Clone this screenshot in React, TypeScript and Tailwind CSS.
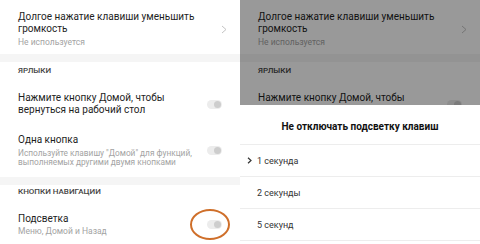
import React from "react"

const font = { fontFamily: "Roboto, 'Noto Sans', 'Liberation Sans', sans-serif" }

function Toggle() {
  return (
    <div className="flex h-[9px] w-[15px] shrink-0 items-center justify-end rounded-full bg-[#ececec] pr-[1px]">
      <div className="h-[7px] w-[7px] rounded-full bg-[#cdcdcd]" />
    </div>
  )
}

function Chevron() {
  return (
    <svg width="6" height="9" viewBox="0 0 6 9" className="shrink-0">
      <polyline points="1,1 5,4.5 1,8" fill="none" stroke="#c4c4c4" strokeWidth="1" />
    </svg>
  )
}

function Band() {
  return <div className="h-[8px] w-full bg-[#f5f5f5]" />
}

// short = only the rows that peek out above the bottom sheet
function SettingsList({ short = false }: { short?: boolean }) {
  return (
    <div className="flex flex-col bg-white">
      <div className="h-[54px] shrink-0 pl-[18px] pr-[13px] pt-[11px]">
        <div className="flex items-center justify-between">
          <div className="w-[192px]">
            <div className="text-[10px] leading-[12px] text-[#1e1e1e]">
              Долгое нажатие клавиши уменьшить громкость
            </div>
            <div className="mt-[2px] text-[8.5px] leading-[10px] text-[#a3a3a3]">Не используется</div>
          </div>
          <Chevron />
        </div>
      </div>
      <Band />
      <div className="h-[22px] shrink-0 pl-[18px] pt-[4px] text-[8px] font-medium leading-[10px] text-[#444]">
        ЯРЛЫКИ
      </div>
      <div className="h-[40px] shrink-0 pl-[18px] pr-[18px] pt-[8px]">
        <div className="flex items-center">
          <div className="h-[24px] min-w-0 flex-1 pr-[6px] text-[10px] leading-[12px] text-[#1e1e1e]">
            {short ? "Нажмите кнопку Домой, чтобы" : "Нажмите кнопку Домой, чтобы вернуться на рабочий стол"}
          </div>
          <Toggle />
        </div>
      </div>
      {short ? null : (
        <>
          <div className="h-[53px] shrink-0 pl-[18px] pr-[18px] pt-[10px]">
            <div className="flex items-center">
              <div className="min-w-0 flex-1 pr-[6px]">
                <div className="text-[10px] leading-[12px] text-[#1e1e1e]">Одна кнопка</div>
                <div className="mt-[3px] text-[8.3px] leading-[9px] text-[#a3a3a3]">
                  Используйте клавишу "Домой" для функций, выполняемых другими двумя кнопками
                </div>
              </div>
              <Toggle />
            </div>
          </div>
          <Band />
          <div className="h-[20px] shrink-0 pl-[18px] pt-[2px] text-[8px] font-medium leading-[10px] text-[#444]">
            КНОПКИ НАВИГАЦИИ
          </div>
          <div className="h-[39px] shrink-0 pl-[18px] pr-[18px] pt-[8px]">
            <div className="flex items-center">
              <div className="min-w-0 flex-1 pr-[6px]">
                <div className="text-[10px] leading-[12px] text-[#1e1e1e]">Подсветка</div>
                <div className="mt-[1px] text-[8.5px] leading-[10px] text-[#a3a3a3]">Меню, Домой и Назад</div>
              </div>
              <Toggle />
            </div>
          </div>
        </>
      )}
    </div>
  )
}

function Option({ label, selected }: { label: string; selected?: boolean }) {
  return (
    <div className="flex h-[32px] items-center border-b border-[#ededed] pl-[7px]">
      <div className="flex w-[10px] items-center">
        {selected ? (
          <svg width="5" height="7" viewBox="0 0 5 7">
            <polyline points="1,0.8 4,3.5 1,6.2" fill="none" stroke="#333" strokeWidth="1.2" />
          </svg>
        ) : null}
      </div>
      <span className="text-[9px] leading-[10px] text-[#333]">{label}</span>
    </div>
  )
}

export default function App() {
  return (
    <div className="flex h-[244px] w-[480px] overflow-hidden bg-white" style={font}>
      <div className="relative h-[244px] w-[240px] overflow-hidden">
        <SettingsList />
        <div className="absolute left-[190px] top-[209px] h-[31px] w-[40px] rounded-[50%] border-2 border-[#cf6f2a]" />
      </div>
      <div className="flex h-[244px] w-[240px] flex-col">
        <div className="relative h-[105px] shrink-0 overflow-hidden">
          <SettingsList short />
          <div className="absolute inset-0 bg-black/40" />
        </div>
        <div className="flex flex-1 flex-col bg-white">
          <div className="flex h-[40px] items-center justify-center border-b border-[#ededed] pt-[4px] text-[10px] font-bold leading-[12px] text-[#111]">
            Не отключать подсветку клавиш
          </div>
          <Option label="1 секунда" selected />
          <Option label="2 секунды" />
          <Option label="5 секунд" />
        </div>
      </div>
    </div>
  )
}
